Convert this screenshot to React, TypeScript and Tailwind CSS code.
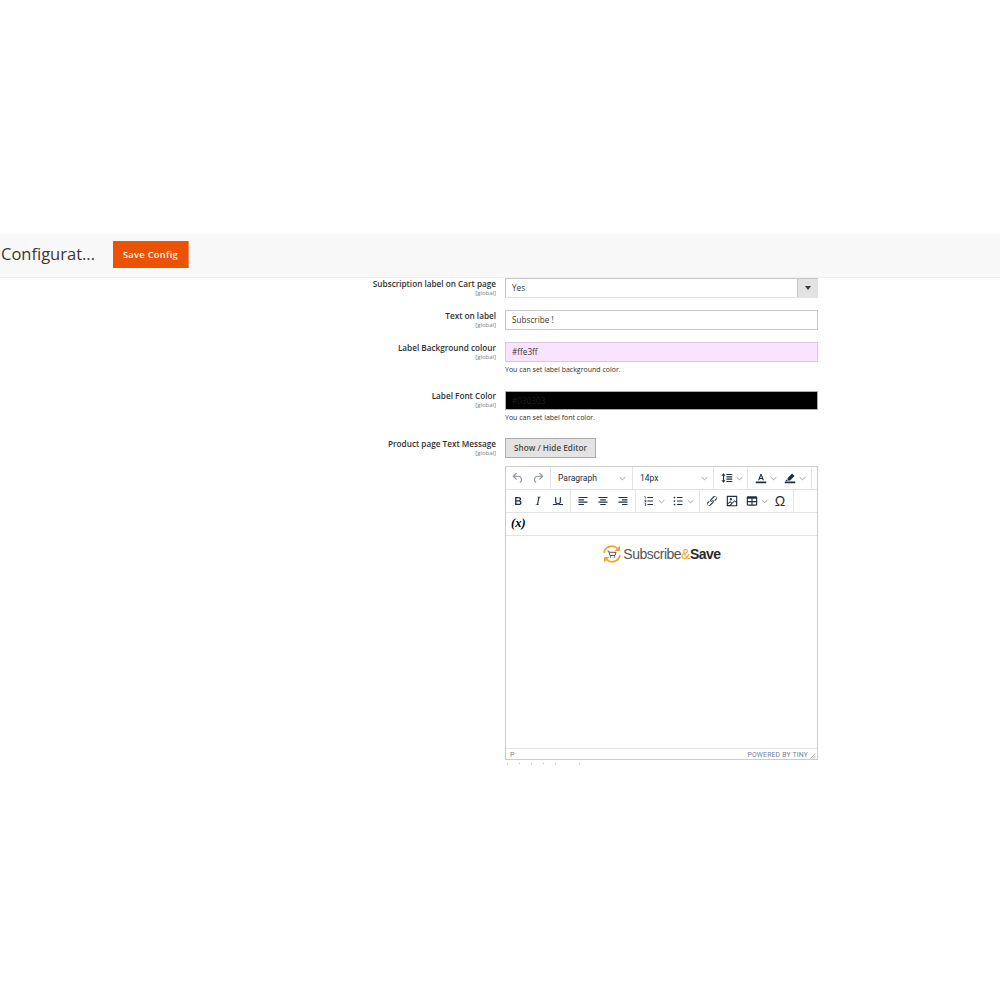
import React from "react";

const ICON = "#222f3e";

const paths: Record<string, string> = {
  undo: "M6.4 8H12c3.7 0 6.2 2 6.8 5.1.6 2.7-.4 5.6-2.3 6.8a1 1 0 0 1-1-1.8c1.1-.6 1.8-2.7 1.4-4.6-.5-2.1-2.1-3.5-4.9-3.5H6.4l3.3 3.3a1 1 0 1 1-1.4 1.4l-5-5a1 1 0 0 1 0-1.4l5-5a1 1 0 0 1 1.4 1.4L6.4 8z",
  redo: "M17.6 10H12c-2.8 0-4.4 1.4-4.9 3.5-.4 2 .3 4 1.4 4.6a1 1 0 1 1-1 1.8c-2-1.2-2.9-4.1-2.3-6.8.6-3 3-5.1 6.8-5.1h5.6l-3.3-3.3a1 1 0 1 1 1.4-1.4l5 5a1 1 0 0 1 0 1.4l-5 5a1 1 0 0 1-1.4-1.4l3.3-3.3z",
  bold: "M7.8 19c-.3 0-.5 0-.6-.2l-.2-.5V5.7c0-.2 0-.4.2-.5l.6-.2h5c1.5 0 2.7.3 3.5 1 .7.6 1.1 1.4 1.1 2.5a3 3 0 0 1-.6 1.9c-.4.6-1 1-1.6 1.2.4.1.9.3 1.3.6s.8.7 1 1.2c.4.4.5 1 .5 1.6 0 1.3-.4 2.3-1.3 3-.8.7-2.1 1-3.8 1H7.8zm5-8.3c.6 0 1.2-.1 1.6-.5.4-.3.6-.7.6-1.3 0-1.1-.8-1.7-2.3-1.7H9.3v3.5h3.4zm.5 6c.7 0 1.3-.1 1.7-.4.4-.4.6-.9.6-1.5s-.2-1-.7-1.4c-.4-.3-1-.4-2-.4H9.4v3.8h4z",
  italic: "M16.7 4.7l-.1.9h-.3c-.6 0-1 0-1.4.3-.3.3-.4.6-.5 1.1l-2.1 9.8v.6c0 .5.4.8 1.4.8h.2l-.2.8H8l.2-.8h.2c1.1 0 1.8-.5 2-1.5l2-9.8.1-.5c0-.6-.4-.8-1.4-.8h-.3l.2-.9h5.8z",
  underline: "M16 5c.6 0 1 .4 1 1v7c0 2.8-2.2 5-5 5s-5-2.2-5-5V6c0-.6.4-1 1-1s1 .4 1 1v7c0 1.7 1.3 3 3 3s3-1.3 3-3V6c0-.6.4-1 1-1zM4 17h16c.6 0 1 .4 1 1s-.4 1-1 1H4a1 1 0 1 1 0-2z",
  alignLeft: "M5 5h14a1 1 0 0 1 0 2H5a1 1 0 1 1 0-2zm0 4h8a1 1 0 0 1 0 2H5a1 1 0 1 1 0-2zm0 8h8a1 1 0 0 1 0 2H5a1 1 0 0 1 0-2zm0-4h14a1 1 0 0 1 0 2H5a1 1 0 0 1 0-2z",
  alignCenter: "M5 5h14a1 1 0 0 1 0 2H5a1 1 0 1 1 0-2zm3 4h8a1 1 0 0 1 0 2H8a1 1 0 1 1 0-2zm0 8h8a1 1 0 0 1 0 2H8a1 1 0 0 1 0-2zm-3-4h14a1 1 0 0 1 0 2H5a1 1 0 0 1 0-2z",
  alignRight: "M5 5h14a1 1 0 0 1 0 2H5a1 1 0 1 1 0-2zm6 4h8a1 1 0 0 1 0 2h-8a1 1 0 0 1 0-2zm0 8h8a1 1 0 0 1 0 2h-8a1 1 0 0 1 0-2zm-6-4h14a1 1 0 0 1 0 2H5a1 1 0 0 1 0-2z",
  numlist: "M10 17h8c.6 0 1 .4 1 1s-.4 1-1 1h-8a1 1 0 0 1 0-2zm0-6h8c.6 0 1 .4 1 1s-.4 1-1 1h-8a1 1 0 0 1 0-2zm0-6h8c.6 0 1 .4 1 1s-.4 1-1 1h-8a1 1 0 1 1 0-2zM6 4v3.5c0 .3-.2.5-.5.5a.5.5 0 0 1-.5-.5V5h-.5a.5.5 0 0 1 0-1H6zm-1 8.8l.2-.2 1-.8c.2-.2.3-.3.3-.5a.5.5 0 0 0-1 .1.5.5 0 0 1-1 0C4.5 10.6 5.1 10 6 10s1.500.6 1.500 1.400c0 .5-.3.9-.7 1.200l-.6.4h.8a.5.5 0 0 1 0 1H4.500a.5.5 0 0 1-.5-.5c0-.3.2-.5.5-.7zM5 16h1.500a.5.5 0 0 1 .5.5v3a.5.5 0 0 1-.5.5H5a.5.5 0 0 1 0-1h1v-.5h-.5a.5.5 0 0 1 0-1H6V17H5a.5.5 0 0 1 0-1z",
  bullist: "M11 5h8c.6 0 1 .4 1 1s-.4 1-1 1h-8a1 1 0 0 1 0-2zm0 6h8c.6 0 1 .4 1 1s-.4 1-1 1h-8a1 1 0 0 1 0-2zm0 6h8c.6 0 1 .4 1 1s-.4 1-1 1h-8a1 1 0 0 1 0-2zM4.500 6c0-.4.1-.8.4-1 .3-.3.7-.5 1.100-.5s.8.200 1.100.5c.3.200.4.600.4 1s-.1.800-.4 1c-.3.300-.7.500-1.100.500s-.8-.200-1.100-.500c-.3-.200-.4-.600-.4-1zm0 6c0-.4.1-.8.4-1 .3-.3.7-.5 1.100-.5s.8.200 1.100.5c.3.200.4.600.4 1s-.1.800-.4 1c-.3.300-.7.500-1.100.500s-.8-.200-1.100-.500c-.3-.200-.4-.600-.4-1zm0 6c0-.4.1-.8.4-1 .3-.3.7-.5 1.100-.5s.8.200 1.100.5c.3.200.4.600.4 1s-.1.800-.4 1c-.3.300-.7.500-1.100.500s-.8-.200-1.100-.500c-.3-.200-.4-.600-.4-1z",
  link: "M6.200 12.300a1 1 0 0 1 1.400 1.400l-2.100 2.100a2 2 0 1 0 2.700 2.700l4.800-4.800a1 1 0 0 0 0-1.400 1 1 0 1 1 1.300-1.400 3 3 0 0 1 0 4.200l-4.800 4.800a4 4 0 0 1-5.500-5.500l2.200-2.100zm11.600-.6a1 1 0 0 1-1.400-1.400l2.100-2.100a2 2 0 1 0-2.700-2.700L11 10.300a1 1 0 0 0 0 1.400A1 1 0 1 1 9.700 13a3 3 0 0 1 0-4.200l4.800-4.800a4 4 0 0 1 5.500 5.500l-2.200 2.100z",
  image: "M5 15.700l3.300-3.200c.3-.3.700-.3 1 0L12 15l4.100-4c.3-.4.800-.4 1 0l2 1.900V5H5v10.700zM5 18v1h3l2.800-2.900-2-2L5 17.900zm14-3l-2.500-2.400-6.400 6.500H19v-4zM4 3h16c.6 0 1 .4 1 1v16c0 .6-.4 1-1 1H4a1 1 0 0 1-1-1V4c0-.6.4-1 1-1zm6 8a2 2 0 1 0 0-4 2 2 0 0 0 0 4z",
  table: "M19 4a2 2 0 0 1 2 2v12a2 2 0 0 1-2 2H5a2 2 0 0 1-2-2V6c0-1.100.9-2 2-2h14zM5 14v4h6v-4H5zm14 0h-6v4h6v-4zm0-6h-6v4h6V8zM5 12h6V8H5v4z",
  lineHeight: "M6 4l3.500 4H7v8h2.500L6 20l-3.500-4H5V8H2.500L6 4zM11 5h10v2H11V5zm0 4h10v2H11V9zm0 4h10v2H11v-2zm0 4h10v2H11v-2z",
  textColor: "M9 16l.9-2.500h4.200L15 16h2L13 5h-2L7 16h2zm1.500-4.200L12 7.500l1.500 4.300h-3zM3 18h18v3H3v-3z",
  highlight: "M15.500 4.200l4.300 4.300-7.600 7.600H8v-4.300l7.500-7.600zM6.500 14.500L8 16l-1.500 1H4l2.500-2.500zM3 18h18v3H3v-3z",
};

function Icon({ name }: { name: string }) {
  return (
    <svg viewBox="0 0 24 24" className="w-[14px] h-[14px]" fill={ICON} fillRule="evenodd">
      <path d={paths[name]} />
    </svg>
  );
}

function Chevron() {
  return (
    <svg viewBox="0 0 10 10" className="w-[7px] h-[7px]" fill="none" stroke="#8a919b" strokeWidth="1.200">
      <path d="M1 3l4 4 4-4" />
    </svg>
  );
}

function Btn({ name, muted }: { name: string; muted?: boolean }) {
  return (
    <span className={`w-[20px] h-[20px] flex items-center justify-center ${muted ? "opacity-50" : ""}`}>
      <Icon name={name} />
    </span>
  );
}

function SplitBtn({ name, width }: { name: string; width: string }) {
  return (
    <span className={`h-[20px] flex items-center justify-center gap-[2px] ${width}`}>
      <Icon name={name} />
      <Chevron />
    </span>
  );
}

function Row({ label, top, children }: { label: string; top: string; children: React.ReactNode }) {
  return (
    <div className={`flex gap-[9px] ${top}`}>
      <div className="w-[496px] text-right shrink-0">
        <div className="text-[8.200px] leading-[12px] font-semibold text-[#303030]">{label}</div>
        <div className="text-[6px] leading-[6px] text-[#808080]">[global]</div>
      </div>
      <div className="w-[313px]">{children}</div>
    </div>
  );
}

function Note({ children }: { children: React.ReactNode }) {
  return <div className="mt-[2px] text-[7px] leading-[12px] text-[#303030]">{children}</div>;
}

function Logo() {
  return (
    <div className="flex items-center justify-center gap-[1px]">
      <svg viewBox="0 0 20 20" className="w-[20px] h-[20px]">
        <path d="M2 9a8 8 0 0 1 13.500-4.500" fill="none" stroke="#f5a623" strokeWidth="1.700" />
        <path d="M18 1.500v5.500h-5.500z" fill="#f5a623" />
        <path d="M18 11a8 8 0 0 1-13.500 4.500" fill="none" stroke="#f5a623" strokeWidth="1.700" />
        <path d="M2 18.500V13h5.500z" fill="#f5a623" />
        <path d="M5.500 7h1.200l1.300 4.500h5l1-3.200H7.200" fill="none" stroke="#555555" strokeWidth="1" />
        <circle cx="8.500" cy="13" r=".8" fill="#555555" />
        <circle cx="12.500" cy="13" r=".8" fill="#555555" />
      </svg>
      <span className="text-[14px] leading-[20px] tracking-[-0.5px] font-['Liberation_Sans',sans-serif] text-[#555555]">
        Subscribe<span className="text-[#f5a623]">&amp;</span>
        <span className="font-bold text-[#2a2a2a]">Save</span>
      </span>
    </div>
  );
}

export default function App() {
  return (
    <div className="w-[1000px] h-[1000px] bg-white overflow-hidden font-['Open_Sans',sans-serif]">
      <div className="h-[234px]" />

      {/* Page actions */}
      <div className="h-[44px] bg-[#f8f8f8] border-b border-[#eeeeee] flex items-center pb-[3px]">
        <h1 className="w-[113px] pl-[1px] text-[16.500px] font-normal text-[#41362f]">Configurat...</h1>
        <button className="w-[76px] h-[27px] pt-[1px] bg-[#eb5202] border-r border-[#f58a5a] text-white text-[9.300px] font-semibold tracking-[0.3px]">
          Save Config
        </button>
      </div>

      {/* Config rows */}
      <Row label="Subscription label on Cart page" top="">
        <div className="h-[20px] bg-white border border-[#c8c8c8] border-b-[#e3e3e3] flex">
          <span className="flex-1 pl-[6px] text-[8.200px] leading-[18px] text-[#41362f]">Yes</span>
          <span className="w-[21px] -mr-px bg-[#e3e3e3] border-l border-[#c8c8c8] flex items-center justify-center">
            <span className="w-0 h-0 border-x-[3px] border-x-transparent border-t-[4px] border-t-[#41362f]" />
          </span>
        </div>
      </Row>
      <Row label="Text on label" top="mt-[12px]">
        <div className="h-[20px] border border-[#c8c8c8] pl-[6px] text-[8.200px] leading-[18px] text-[#41362f]">Subscribe !</div>
      </Row>
      <Row label="Label Background colour" top="mt-[12px]">
        <div className="h-[20px] border border-[#d9c8d9] bg-[#fae3ff] pl-[6px] text-[8.200px] leading-[18px] text-[#41362f]">#ffe3ff</div>
        <Note>You can set label background color.</Note>
      </Row>
      <Row label="Label Font Color" top="mt-[14px]">
        <div className="mt-[1px] h-[19px] border border-[#adadad] bg-black pl-[6px] text-[8.200px] leading-[17px] text-[#1f1f1f]">#030303</div>
        <Note>You can set label font color.</Note>
      </Row>
      <Row label="Product page Text Message" top="mt-[14px]">
        <button className="block w-[91px] h-[20px] bg-[#e3e3e3] border border-[#adadad] text-[8.200px] font-semibold text-[#514943]">
          Show / Hide Editor
        </button>
      </Row>

      {/* Editor */}
      <div className="ml-[505px] mt-[8px] w-[313px] h-[294px] border border-[#cccccc] flex flex-col text-[8.500px] text-[#222f3e] font-['Roboto',sans-serif]">
        <div className="h-[23px] flex border-b border-[#e3e3e3] shrink-0">
          <div className="w-[45px] px-[2px] flex items-center border-r border-[#e3e3e3]">
            <Btn name="undo" muted />
            <Btn name="redo" muted />
          </div>
          <div className="w-[82px] pl-[7px] pr-[6px] flex items-center justify-between border-r border-[#e3e3e3]">
            <span>Paragraph</span>
            <Chevron />
          </div>
          <div className="w-[81px] pl-[7px] pr-[5px] flex items-center justify-between border-r border-[#e3e3e3]">
            <span>14px</span>
            <Chevron />
          </div>
          <div className="w-[34px] pl-[5px] flex items-center border-r border-[#e3e3e3]">
            <SplitBtn name="lineHeight" width="w-[24px]" />
          </div>
          <div className="w-[64px] pl-[3px] flex items-center border-r border-[#e3e3e3]">
            <SplitBtn name="textColor" width="w-[29px]" />
            <SplitBtn name="highlight" width="w-[29px]" />
          </div>
        </div>
        <div className="h-[23px] flex border-b border-[#e3e3e3] shrink-0">
          <div className="w-[65px] px-[2px] flex items-center border-r border-[#e3e3e3]">
            <Btn name="bold" />
            <Btn name="italic" />
            <Btn name="underline" />
          </div>
          <div className="w-[65px] px-[2px] flex items-center border-r border-[#e3e3e3]">
            <Btn name="alignLeft" />
            <Btn name="alignCenter" />
            <Btn name="alignRight" />
          </div>
          <div className="w-[64px] px-[2px] flex items-center border-r border-[#e3e3e3]">
            <SplitBtn name="numlist" width="w-[30px]" />
            <SplitBtn name="bullist" width="w-[29px]" />
          </div>
          <div className="w-[94px] px-[2px] flex items-center border-r border-[#e3e3e3]">
            <Btn name="link" />
            <Btn name="image" />
            <SplitBtn name="table" width="w-[28px]" />
            <span className="w-[20px] text-center text-[14px] leading-[20px] font-['Liberation_Sans',sans-serif]">Ω</span>
          </div>
        </div>
        <div className="h-[23px] flex items-center pl-[5px] pb-[1px] border-b border-[#e3e3e3] shrink-0 text-[12.500px] font-bold italic text-black font-['Liberation_Serif',serif]">
          (x)
        </div>
        <div className="flex-1 pt-[8px]">
          <Logo />
        </div>
        <div className="h-[11px] border-t border-[#e3e3e3] flex items-center justify-between pl-[4px] pr-[1px] pt-[1px] shrink-0">
          <span className="text-[7px] leading-[10px] text-[#7a8290]">P</span>
          <span className="flex items-center gap-[2px]">
            <span className="text-[6.800px] leading-[10px] tracking-[0.2px] text-[#6f7f9a]">POWERED BY TINY</span>
            <svg viewBox="0 0 10 10" className="w-[6px] h-[6px] mt-[2px]" stroke="#7a8290" strokeWidth="1">
              <path d="M9 1L1 9M9 5L5 9M9 8L8 9" />
            </svg>
          </span>
        </div>
      </div>

      {/* Clipped line of the next field */}
      <div className="ml-[507px] mt-[3px] flex gap-[11px]">
        {[0, 1, 2, 3, 4, 5, 6].map((i) => (
          <span key={i} className={`w-[1px] h-[1px] bg-[#b5b5b5] ${i === 5 ? "invisible" : ""}`} />
        ))}
      </div>
    </div>
  );
}
